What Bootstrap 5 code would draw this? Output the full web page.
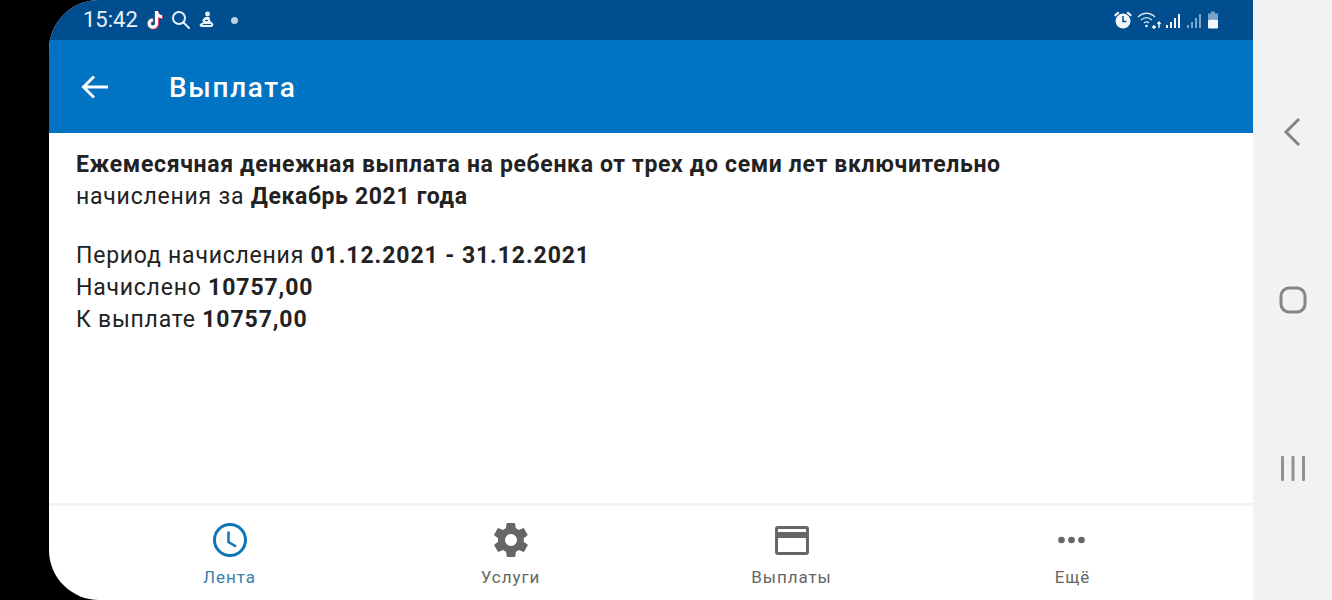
<!DOCTYPE html>
<html lang="ru">
<head>
    <meta charset="UTF-8">
    <meta name="viewport" content="width=device-width, initial-scale=1.0">
    <title>Выплата</title>
    <link href="https://cdn.jsdelivr.net/npm/bootstrap@5.3.0/dist/css/bootstrap.min.css" rel="stylesheet">
    <style>
        html, body { height: 100%; }
        body {
            background: #000;
            font-family: Roboto, "Liberation Sans", sans-serif;
            overflow: hidden;
        }
        .device { height: 600px; padding-left: 49px; }
        .phone-screen {
            width: 1204px;
            height: 600px;
            background: #fff;
            border-radius: 50px 0 0 50px;
            overflow: hidden;
        }
        .status-bar {
            height: 40px;
            background: #004e90;
            color: #e8f1f8;
            padding: 0 34px 0 34px;
        }
        .status-time { font-size: 22px; line-height: 40px; margin-right: 7px; }
        .status-search { margin-left: 6px; margin-right: 7px; }
        .status-dot { width: 7px; height: 7px; margin-left: 16px; }
        .app-bar { height: 93px; background: #0073c2; color: #fff; padding-left: 31px; }
        .app-title { font-size: 28px; font-weight: 500; letter-spacing: 1.65px; margin: 2px 0 0 59px; line-height: 1; }
        .pay-text {
            padding: 16px 27px 0;
            font-size: 23px;
            line-height: 32px;
            color: #222;
            letter-spacing: .77px;
        }
        .pay-text b { font-weight: 700; letter-spacing: .65px; }
        .pay-text b.pay-num { letter-spacing: .92px; }
        .pay-text p { margin: 0 0 27px; }
        .tab-bar { height: 97px; border-top: 3px solid #f3f3f3; }
        .tab-item { width: 281px; color: #666; font-size: 17px; letter-spacing: .95px; line-height: 20px; }
        .tab-item.is-active { color: #3a7fae; }
        .tab-icon { height: 36px; margin-top: 16px; margin-bottom: 9px; }
        .nav-side { width: 79px; height: 600px; background: #f2f2f2; }
        .side-back { margin-top: 116px; margin-left: 1px; }
        .side-home { margin-top: 137px; }
        .side-recent { margin-top: 140px; }
    </style>
</head>
<body>
    <div class="device d-flex">
        <div class="phone-screen d-flex flex-column flex-shrink-0">
            <div class="status-bar d-flex align-items-center flex-shrink-0">
                <span class="status-time">15:42</span>
                <svg width="20" height="22" viewBox="0 0 20 22" fill="none">
                    <path d="M11.500 2v12.500a3.700 3.700 0 1 1-3.700-3.700M11.500 3c.5 2.800 2.200 4.500 5.500 4.700" stroke="#ff2d55" stroke-width="3.200" transform="translate(.8 .7)"/>
                    <path d="M11.500 2v12.500a3.700 3.700 0 1 1-3.700-3.700M11.500 3c.5 2.800 2.200 4.500 5.500 4.700" stroke="#fff" stroke-width="3.200"/>
                </svg>
                <svg width="20" height="20" viewBox="0 0 20 20" class="status-search" fill="none" stroke="#e8f1f8" stroke-width="2">
                    <circle cx="8" cy="8" r="6"/><path d="M12.500 12.500l5.500 5.500" stroke-linecap="round"/>
                </svg>
                <svg width="17" height="20" viewBox="0 0 17 20" fill="#e8f1f8">
                    <circle cx="9.500" cy="4" r="2.400"/>
                    <path d="M7 7h4.500l.5 3.500 3 3c1 2-.5 3.500-2 3.500H4c-2 0-3-1.500-2-3l3.500-2-1.500-1.500z"/>
                    <path d="M5 14.500h8M7 10.500h3" stroke="#004e90" stroke-width="1.200"/>
                </svg>
                <span class="status-dot bg-white rounded-circle opacity-75"></span>
                <div class="ms-auto d-flex align-items-center">
                    <svg width="20" height="20" viewBox="0 0 20 20" fill="#f2f6fa" class="me-1">
                        <circle cx="10" cy="11" r="7.500"/>
                        <path d="M1 5l4-3.500 1.500 1.500-4 3.500zM19 5l-4-3.500-1.500 1.500 4 3.500z"/>
                        <path d="M10 6v5.500h3.500" stroke="#004e90" stroke-width="1.500" fill="none"/>
                    </svg>
                    <svg width="24" height="20" viewBox="0 0 24 20" fill="none" stroke="#dbe6ef" stroke-width="1.300">
                        <path d="M1 7c5-5 12-5 17 0M4 10c3.500-3 7.500-3 11 0M7 13c2-1.500 3.500-1.500 5 0"/>
                        <circle cx="9.500" cy="16" r="1.200" fill="#fff" stroke="none"/>
                        <path d="M15 17h4M17 15v4M22 18v-6M20.500 14l1.500-2 1.500 2" stroke="#fff"/>
                    </svg>
                    <svg width="17" height="18" viewBox="0 0 17 18" fill="#f2f6fa" class="ms-1">
                        <rect x="1" y="14" width="2" height="3"/><rect x="5" y="11" width="2" height="6"/><rect x="9" y="7" width="2" height="10"/><rect x="13" y="3" width="2" height="14"/>
                    </svg>
                    <svg width="17" height="18" viewBox="0 0 17 18" fill="#7fa5c6" class="ms-1">
                        <rect x="1" y="14" width="2" height="3"/><rect x="5" y="11" width="2" height="6"/><rect x="9" y="7" width="2" height="10"/><rect x="13" y="3" width="2" height="14"/>
                    </svg>
                    <svg width="12" height="20" viewBox="0 0 12 20" fill="#f2f6fa" class="ms-1">
                        <path d="M4 1.500h4v2h3v6H1v-6h3z" opacity=".5"/><rect x="1" y="9.500" width="10" height="9" rx="1"/>
                    </svg>
                </div>
            </div>
            <div class="app-bar d-flex align-items-center flex-shrink-0">
                <svg width="30" height="30" viewBox="0 0 30 30" fill="none" stroke="#fff" stroke-width="3">
                    <path d="M28 15H4M14 4.500L3.500 15 14 25.500"/>
                </svg>
                <h1 class="app-title">Выплата</h1>
            </div>
            <div class="pay-text flex-grow-1">
                <p><b>Ежемесячная денежная выплата на ребенка от трех до семи лет включительно</b><br>начисления за <b>Декабрь 2021 года</b></p>
                <div>Период начисления <b class="pay-num">01.12.2021 - 31.12.2021</b></div>
                <div>Начислено <b class="pay-num">10757,00</b></div>
                <div>К выплате <b class="pay-num">10757,00</b></div>
            </div>
            <div class="tab-bar d-flex justify-content-center flex-shrink-0 text-center">
                <div class="tab-item is-active">
                    <div class="tab-icon">
                        <svg width="36" height="36" viewBox="0 0 36 36" fill="none" stroke="#0f75b5">
                            <circle cx="18" cy="18" r="15.500" stroke-width="3"/>
                            <path d="M16.500 9.500V20l7.500 4.500" stroke-width="2.500"/>
                        </svg>
                    </div>
                    Лента
                </div>
                <div class="tab-item">
                    <div class="tab-icon">
                        <svg width="36" height="36" viewBox="1.500 1.500 21 21" fill="#666">
                            <path d="M19.400 13c.1-.3.100-.7.100-1s0-.7-.1-1l2.100-1.600c.2-.2.200-.4.100-.6l-2-3.500c-.1-.2-.4-.3-.6-.2l-2.500 1c-.5-.4-1.100-.7-1.700-1l-.4-2.600c0-.3-.2-.4-.5-.4h-4c-.3 0-.5.100-.5.400l-.4 2.600c-.6.300-1.200.6-1.700 1l-2.500-1c-.2-.1-.5 0-.6.200l-2 3.500c-.1.200-.1.400.1.600L4.500 11c0 .3-.1.700-.1 1s0 .7.100 1l-2.100 1.600c-.2.200-.2.400-.1.600l2 3.500c.1.200.4.300.6.200l2.500-1c.5.400 1.100.7 1.700 1l.4 2.600c0 .3.200.4.500.4h4c.3 0 .5-.1.500-.4l.4-2.600c.6-.3 1.200-.6 1.700-1l2.500 1c.2.100.5 0 .6-.2l2-3.500c.1-.2.100-.4-.1-.6zM12 15.500a3.500 3.500 0 1 1 0-7 3.500 3.500 0 0 1 0 7z"/>
                        </svg>
                    </div>
                    Услуги
                </div>
                <div class="tab-item">
                    <div class="tab-icon">
                        <svg width="36" height="36" viewBox="0 0 36 36" fill="#666">
                            <path fill-rule="evenodd" d="M4 4h28a3 3 0 0 1 3 3v23a3 3 0 0 1-3 3H4a3 3 0 0 1-3-3V7a3 3 0 0 1 3-3zm0 3v3h28V7zm0 9v14h28V16z"/>
                        </svg>
                    </div>
                    Выплаты
                </div>
                <div class="tab-item">
                    <div class="tab-icon">
                        <svg width="36" height="36" viewBox="0 0 36 36" fill="#666">
                            <circle cx="6.500" cy="18" r="3.300"/><circle cx="16.500" cy="18" r="3.300"/><circle cx="26.500" cy="18" r="3.300"/>
                        </svg>
                    </div>
                    Ещё
                </div>
            </div>
        </div>
        <div class="nav-side flex-shrink-0 d-flex flex-column align-items-center">
            <svg width="24" height="32" viewBox="0 0 24 32" fill="none" stroke="#858585" stroke-width="3" class="side-back">
                <path d="M18 3L5 16l13 13"/>
            </svg>
            <svg width="30" height="30" viewBox="0 0 30 30" fill="none" stroke="#858585" stroke-width="3" class="side-home">
                <rect x="3" y="3" width="24" height="24" rx="8"/>
            </svg>
            <svg width="28" height="28" viewBox="0 0 28 28" fill="#919191" class="side-recent">
                <rect x="2" y="1" width="3" height="25" rx="1"/><rect x="12.500" y="1" width="3" height="25" rx="1"/><rect x="23" y="1" width="3" height="25" rx="1"/>
            </svg>
        </div>
    </div>
</body>
</html>
